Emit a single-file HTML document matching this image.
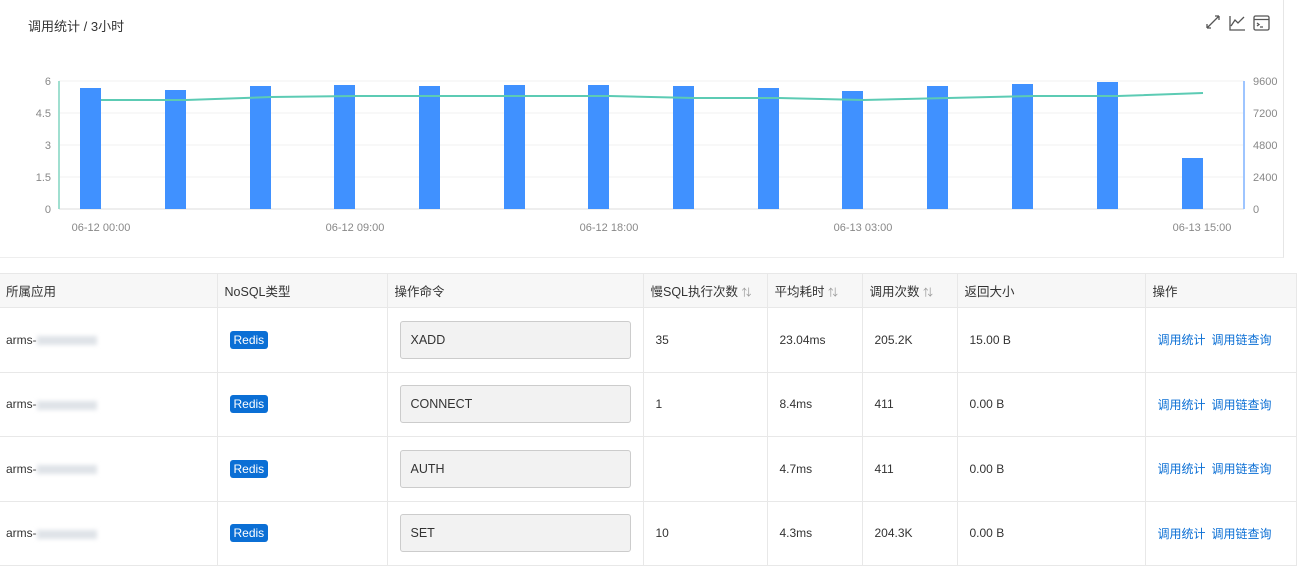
<!DOCTYPE html>
<html><head><meta charset="utf-8"><style>
*{margin:0;padding:0;box-sizing:border-box}
body{width:1297px;height:566px;background:#fff;font-family:"Liberation Sans","Noto Sans CJK SC",sans-serif;overflow:hidden;position:relative;color:#333}
.card{position:absolute;left:0;top:0;width:1284px;height:258px;border-right:1px solid #e6e6e6;border-bottom:1px solid #eee}
.title{position:absolute;left:28px;top:16px;font-size:13px;color:#333}
table{position:absolute;left:0;top:273px;width:1297px;border-collapse:collapse;font-size:12px}
th{background:#f7f7f7;font-weight:normal;text-align:left;height:34px;padding-left:7px;border:1px solid #e8e8e8;border-left:none;color:#333;font-size:12.5px}
th:first-child,td:first-child{padding-left:6px}
td{height:64.5px;padding-left:12px;border:1px solid #e8e8e8;border-left:none;color:#333}
td:first-child{padding-left:6px}
.blur{display:inline-block;width:60px;height:9px;background:#dfe3e8;filter:blur(2px);vertical-align:middle}
.tag{display:inline-block;background:#0b6fd5;color:#fff;border-radius:3px;padding:2px 4px;font-size:12px}
.cmd{width:231px;height:38px;border:1px solid #ccc;border-radius:3px;background:#f2f2f2;line-height:36px;padding-left:10px;font-size:12.5px}
a{color:#0b6fd5;text-decoration:none;margin-right:6px}
.s{color:#999;font-size:10px}
</style></head><body>
<div class="card">
<div class="title">调用统计 / 3小时</div>
<svg width="1297" height="258" style="position:absolute;left:0;top:0" font-family="Liberation Sans" font-size="11" fill="#888">
<g stroke="#f0f0f0"><line x1="59" x2="1244" y1="81" y2="81"/><line x1="59" x2="1244" y1="113" y2="113"/><line x1="59" x2="1244" y1="145" y2="145"/><line x1="59" x2="1244" y1="177" y2="177"/></g>
<line x1="59" x2="1244" y1="209" y2="209" stroke="#ddd"/>
<line x1="59" x2="59" y1="81" y2="209" stroke="#a0dfd0" stroke-width="2"/>
<line x1="1244" x2="1244" y1="81" y2="209" stroke="#9ec5ff" stroke-width="2"/>
<g fill="#4091ff">
<rect x="80" y="88" width="21" height="121"/><rect x="165" y="90" width="21" height="119"/><rect x="250" y="86" width="21" height="123"/><rect x="334" y="85" width="21" height="124"/><rect x="419" y="86" width="21" height="123"/><rect x="504" y="85" width="21" height="124"/><rect x="588" y="85" width="21" height="124"/><rect x="673" y="86" width="21" height="123"/><rect x="758" y="88" width="21" height="121"/><rect x="842" y="91" width="21" height="118"/><rect x="927" y="86" width="21" height="123"/><rect x="1012" y="84" width="21" height="125"/><rect x="1097" y="82" width="21" height="127"/><rect x="1182" y="158" width="21" height="51"/>
</g>
<polyline fill="none" stroke="#5ccbb4" stroke-width="2" points="101,100 186,100 271,97 355,96 440,96 525,96 609,96 694,98 779,98 863,100 948,98 1033,96 1118,96 1203,93"/>
<g text-anchor="end"><text x="51" y="85">6</text><text x="51" y="117">4.5</text><text x="51" y="149">3</text><text x="51" y="181">1.5</text><text x="51" y="213">0</text></g>
<g><text x="1253" y="85">9600</text><text x="1253" y="117">7200</text><text x="1253" y="149">4800</text><text x="1253" y="181">2400</text><text x="1253" y="213">0</text></g>
<g text-anchor="middle"><text x="101" y="231">06-12 00:00</text><text x="355" y="231">06-12 09:00</text><text x="609" y="231">06-12 18:00</text><text x="863" y="231">06-13 03:00</text><text x="1202" y="231">06-13 15:00</text></g>
<g stroke="#555" fill="none" stroke-width="1.3"><path d="M1207 28 L1219 16 M1207 28 v-4 M1207 28 h4 M1219 16 v4 M1219 16 h-4"/>
<path d="M1230 16 V30 H1245 M1231 26 L1235 20 L1238 23 L1244 17"/>
<rect x="1254" y="16" width="15" height="14" rx="1.5"/><path d="M1254 19.5 H1269 M1257 23 l2 1.5 l-2 1.5 M1260 27 h3"/></g>
</svg>
</div>
<table>
<tr><th style="width:217px">所属应用</th><th style="width:170px">NoSQL类型</th><th style="width:256px">操作命令</th><th style="width:124px">慢SQL执行次数 <span class="s">⇅</span></th><th style="width:95px">平均耗时 <span class="s">⇅</span></th><th style="width:95px">调用次数 <span class="s">⇅</span></th><th style="width:188px">返回大小</th><th>操作</th></tr>
<tr><td>arms-<span class="blur"></span></td><td><span class="tag">Redis</span></td><td><div class="cmd">XADD</div></td><td>35</td><td>23.04ms</td><td>205.2K</td><td>15.00 B</td><td><a>调用统计</a><a>调用链查询</a></td></tr>
<tr><td>arms-<span class="blur"></span></td><td><span class="tag">Redis</span></td><td><div class="cmd">CONNECT</div></td><td>1</td><td>8.4ms</td><td>411</td><td>0.00 B</td><td><a>调用统计</a><a>调用链查询</a></td></tr>
<tr><td>arms-<span class="blur"></span></td><td><span class="tag">Redis</span></td><td><div class="cmd">AUTH</div></td><td></td><td>4.7ms</td><td>411</td><td>0.00 B</td><td><a>调用统计</a><a>调用链查询</a></td></tr>
<tr><td>arms-<span class="blur"></span></td><td><span class="tag">Redis</span></td><td><div class="cmd">SET</div></td><td>10</td><td>4.3ms</td><td>204.3K</td><td>0.00 B</td><td><a>调用统计</a><a>调用链查询</a></td></tr>
</table>
</body></html>
